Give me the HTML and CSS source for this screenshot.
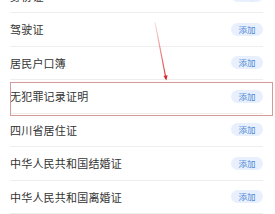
FILE: index.html
```html
<!DOCTYPE html>
<html lang="zh">
<head>
    <meta charset="UTF-8">
    <meta name="viewport" content="width=device-width, initial-scale=1.0">
    <title>证件</title>
    <link rel="stylesheet" href="styles.css">
</head>
<body>
    <div class="list">
        <div class="item"><span class="name">身份证</span><button class="add">添加</button></div>
        <div class="item"><span class="name">驾驶证</span><button class="add">添加</button></div>
        <div class="item"><span class="name">居民户口簿</span><button class="add">添加</button></div>
        <div class="item"><span class="name">无犯罪记录证明</span><button class="add">添加</button></div>
        <div class="item"><span class="name">四川省居住证</span><button class="add">添加</button></div>
        <div class="item"><span class="name">中华人民共和国结婚证</span><button class="add">添加</button></div>
        <div class="item"><span class="name">中华人民共和国离婚证</span><button class="add">添加</button></div>
    </div>
    <div class="mark"></div>
    <svg class="arrow" width="275" height="214" viewBox="0 0 275 214">
        <defs>
            <linearGradient id="fade" x1="0" y1="0" x2="0" y2="1">
                <stop offset="0" stop-color="#e23b3b" stop-opacity="0.15"/>
                <stop offset="1" stop-color="#d92c2c" stop-opacity="1"/>
            </linearGradient>
        </defs>
        <line x1="155" y1="22" x2="166" y2="79" stroke="url(#fade)" stroke-width="1.2"/>
        <path d="M163.5 76 L166.3 80.5 L167.6 75.3 Z" fill="#d92c2c"/>
    </svg>
</body>
</html>
```

FILE: styles.css
```css
body {
    margin: 0;
    background: #fff;
    font-family: "Noto Sans CJK SC", "Noto Sans", sans-serif;
    color: #333;
    overflow: hidden;
    position: relative;
    height: 214px;
}
.list {
    margin-top: -20.5px;
}
.item {
    display: flex;
    align-items: center;
    justify-content: space-between;
    box-sizing: border-box;
    height: 33.5px;
    margin: 0 12px 0 10px;
    border-bottom: 1px solid #eeeeee;
}
.name {
    font-size: 11px;
    letter-spacing: 0.2px;
}
.add {
    width: 32px;
    height: 13px;
    padding: 0;
    border: none;
    border-radius: 7px;
    background: #e7f0fc;
    color: #4f86d6;
    font-family: inherit;
    font-size: 8.5px;
    line-height: 13px;
}
.mark {
    position: absolute;
    left: 10px;
    top: 82px;
    width: 263px;
    height: 34px;
    box-sizing: border-box;
    border: 1.5px solid #d49a98;
}
.arrow {
    position: absolute;
    left: 0;
    top: 0;
}
```
